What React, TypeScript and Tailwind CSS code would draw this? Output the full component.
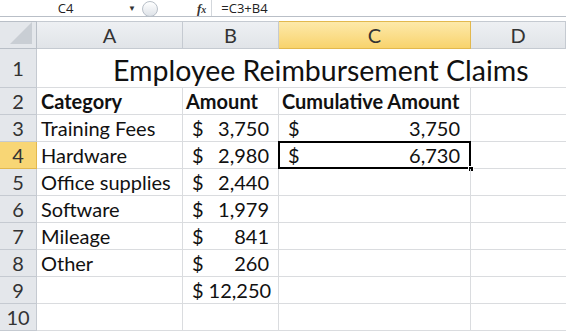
import React from 'react'

const font = { fontFamily: 'Lato, "Open Sans", sans-serif' }

const rows: { n: number; a: string; b?: [string, string]; c?: [string, string]; bold?: boolean }[] = [
  { n: 2, a: 'Category', b: ['Amount', ''], c: ['Cumulative Amount', ''], bold: true },
  { n: 3, a: 'Training Fees', b: ['$', '3,750'], c: ['$', '3,750'] },
  { n: 4, a: 'Hardware', b: ['$', '2,980'], c: ['$', '6,730'] },
  { n: 5, a: 'Office supplies', b: ['$', '2,440'] },
  { n: 6, a: 'Software', b: ['$', '1,979'] },
  { n: 7, a: 'Mileage', b: ['$', '841'] },
  { n: 8, a: 'Other', b: ['$', '260'] },
  { n: 9, a: '', b: ['$', '12,250'] },
  { n: 10, a: '' },
]

function Money({ v, pad }: { v?: [string, string]; pad: string }) {
  if (!v) return null
  if (!v[1]) return <span className="pl-[3px]">{v[0]}</span>
  return (
    <div className={`flex justify-between gap-[5px] w-full ${pad}`}>
      <span>{v[0]}</span>
      <span>{v[1]}</span>
    </div>
  )
}

export default function App() {
  return (
    <div className="w-[566px] h-[332px] overflow-hidden bg-white text-[#111]" style={font}>
      {/* formula bar */}
      <div className="h-[17px] flex items-center border-b border-[#b9bfc7] text-[13px] leading-none text-[#222]"
        style={{ fontFamily: '"Open Sans", sans-serif' }}>
        <div className="w-[128px] flex justify-center pl-[3px]">C4</div>
        <span className="text-[8px] text-[#333]">▼</span>
        <div className="ml-[6px] w-[16px] h-[16px] mt-[2px] rounded-full border border-[#b8bfc8] bg-gradient-to-b from-white to-[#dde2e8]" />
        <span className="ml-[39px] italic font-bold text-[13px] text-[#333]"
          style={{ fontFamily: '"Liberation Serif", serif' }}>f<span className="text-[10px]">x</span></span>
        <div className="ml-[5px] h-full border-l border-[#d3d7dc] pl-[9px] flex items-center">=C3+B4</div>
      </div>
      <div className="h-[4px] bg-white" />

      <div className="grid grid-cols-[37px_146px_96px_192px_1fr]">
        {/* column headers */}
        <div className="h-[28px] border-t border-r border-b border-[#b9bfc7] bg-[#e4e7eb] relative overflow-hidden">
          <div className="absolute right-[4px] bottom-[4px] w-0 h-0 border-l-[22px] border-l-transparent border-b-[22px] border-b-[#c9ced4]" />
        </div>
        {['A', 'B', 'C', 'D'].map((c) => (
          <div key={c}
            className={`h-[28px] border-t border-r border-b flex items-center justify-center text-[20px] text-[#333] ${
              c === 'C'
                ? 'bg-gradient-to-b from-[#fde9a9] to-[#f8d36c] border-[#e2b84e]'
                : 'bg-gradient-to-b from-[#eef0f3] to-[#e1e4e8] border-[#c5cad1]'}`}>
            {c}
          </div>
        ))}

        {/* row 1 */}
        <div className="h-[39px] border-r border-b border-[#c5cad1] bg-[#e4e7eb] flex items-center justify-center text-[20px] text-[#333]">1</div>
        <div className="col-span-4 h-[39px] border-b border-[#dadcdf] flex items-end pb-[3px] pl-[76px] text-[28.5px] leading-none">
          Employee Reimbursement Claims
        </div>

        {rows.map((r) => (
          <React.Fragment key={r.n}>
            <div className={`h-[27px] border-r border-b flex items-center justify-center text-[20px] text-[#333] ${
              r.n === 4 ? 'bg-[#f8d675] border-[#e2b84e]' : 'bg-[#e4e7eb] border-[#c5cad1]'}`}>
              {r.n}
            </div>
            <div className={`h-[27px] border-r border-b border-[#dadcdf] flex items-end pb-[1px] pl-[4px] text-[20px] leading-[24px] whitespace-nowrap ${r.bold ? 'font-bold' : ''}`}>
              {r.a}
            </div>
            <div className={`h-[27px] border-r border-b border-[#dadcdf] flex items-end pb-[1px] text-[20px] leading-[24px] whitespace-nowrap ${r.bold ? 'font-bold' : ''}`}>
              <Money v={r.b} pad="pl-[9px] pr-[9px]" />
            </div>
            <div className={`h-[27px] border-r border-b border-[#dadcdf] flex items-end pb-[1px] text-[20px] leading-[24px] whitespace-nowrap relative ${r.bold ? 'font-bold' : ''}`}>
              <Money v={r.c} pad="pl-[9px] pr-[10px]" />
              {r.n === 4 && (
                <>
                  <div className="absolute left-[-1px] right-[-1px] top-[-1px] bottom-[-1px] border-2 border-black pointer-events-none" />
                  <div className="absolute right-[-4px] bottom-[-4px] w-[6px] h-[6px] bg-black border border-white" />
                </>
              )}
            </div>
            <div className="h-[27px] border-b border-[#dadcdf]" />
          </React.Fragment>
        ))}
      </div>
    </div>
  )
}
